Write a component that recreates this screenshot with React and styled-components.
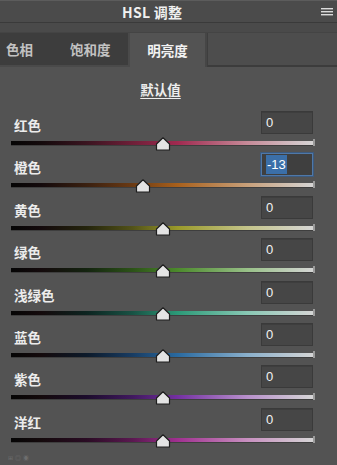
import React from "react";
import styled, { createGlobalStyle } from "styled-components";

const Global = createGlobalStyle`
  html, body { margin: 0; padding: 0; background: #535353; }
  body { font-family: "Noto Sans CJK SC", "Noto Sans", sans-serif; }
`;

const Panel = styled.div`
  width: 337px;
  height: 465px;
  background: #535353;
  display: flex;
  flex-direction: column;
  overflow: hidden;
`;

const Header = styled.div`
  display: flex;
  align-items: center;
  justify-content: space-between;
  background: #4b4b4b;
  border-top: 1px solid #5c5c5c;
  border-bottom: 1px solid #3a3a3a;
  box-sizing: border-box;
  height: 23px;
  padding-left: 122px;
`;

const Title = styled.div`
  color: #f0f0f0;
  font-size: 14px;
  font-weight: 700;
  letter-spacing: 0.3px;
`;

const MenuIcon = styled.svg`
  margin-right: 4px;
`;

const Band = styled.div`
  height: 9px;
  background: #4a4a4a;
  border-bottom: 1px solid #444;
`;

const TabBar = styled.div`
  height: 34px;
  display: flex;
  background: #4a4a4a;
`;

const TabGroup = styled.div`
  width: 128px;
  display: flex;
  background: #3d3d3d;
  height: 32px;
  margin-right: 2px;
`;

const Tab = styled.div`
  width: 64px;
  box-sizing: border-box;
  padding-left: 6px;
  display: flex;
  align-items: center;
  color: #c2c2c2;
  font-size: 13.5px;
  font-weight: 700;
`;

const ActiveTab = styled.div`
  width: 75px;
  display: flex;
  align-items: center;
  justify-content: center;
  color: #f2f2f2;
  font-size: 13.5px;
  font-weight: 700;
  background: #535353;
  border-right: 2px solid #464646;
`;

const Filler = styled.div`
  flex: 1;
  background: #4d4d4d;
  border-left: 1px solid #3e3e3e;
  border-bottom: 2px solid #3c3c3c;
  height: 34px;
  box-sizing: border-box;
`;

const DefaultWrap = styled.div`
  display: flex;
  justify-content: center;
  padding-top: 13px;
  padding-right: 16px;
  height: 44px;
  box-sizing: border-box;
`;

const DefaultButton = styled.span`
  color: #ededed;
  font-size: 13.5px;
  font-weight: 700;
  text-decoration: underline;
  text-underline-offset: 3px;
  line-height: 18px;
`;

const Rows = styled.div`
  display: flex;
  flex-direction: column;
`;

const Row = styled.div`
  height: 42.4px;
  display: grid;
  grid-template-columns: 1fr 52px;
  grid-template-rows: 23px 1fr;
  padding: 0 24px 0 11px;
`;

const Label = styled.div`
  color: #ececec;
  font-size: 13.5px;
  font-weight: 700;
  padding-left: 3px;
  display: flex;
  align-items: flex-end;
  line-height: 18px;
  padding-top: 4px;
`;

const ValueBox = styled.div`
  box-sizing: border-box;
  height: 23px;
  background: ${(p) => (p.$active ? "#3f3f3f" : "#464646")};
  border: 1px solid ${(p) => (p.$active ? "#4f78a8" : "#3a3a3a")};
  box-shadow: ${(p) =>
    p.$active ? "0 0 0 1px #3c5a7e" : "inset 0 1px 0 #3e3e3e"};
  display: flex;
  align-items: center;
  padding-left: 4px;
  color: #f2f2f2;
  font-size: 13px;
  font-family: "Liberation Sans", "Noto Sans", sans-serif;
`;

const Selected = styled.span`
  background: #3b6fa8;
  color: #fff;
  padding: 1px 1px;
  line-height: 17px;
`;

const TrackArea = styled.div`
  grid-column: 1 / 3;
  position: relative;
  margin-right: -1px;
`;

const Track = styled.div`
  position: absolute;
  left: 0;
  right: 0;
  top: 7px;
  height: 4px;
  background: ${(p) => p.$grad};
  box-shadow: 0 1px 0 rgba(0, 0, 0, 0.25);
`;

const EndCap = styled.div`
  position: absolute;
  right: -1px;
  top: 5px;
  width: 2px;
  height: 7px;
  background: #9a9a9a;
`;

const Thumb = styled.svg`
  position: absolute;
  top: 3px;
  margin-left: -8px;
`;

const Footer = styled.div`
  display: flex;
  gap: 2px;
  padding: 3px 0 0 8px;
  color: #6e6e6e;
  font-size: 6px;
  font-family: "Noto Sans CJK SC", sans-serif;
`;

const grad = (d1, d2, mid, light) =>
  `linear-gradient(to right, #050505 0%, #140a0c 10%, ${d1} 25%, ${d2} 40%, ${mid} 55%, ${light} 78%, #d6d6d6 100%)`;

const rows = [
  { label: "红色", value: 0, g: grad("#3a1420", "#6e1f38", "#a02a50", "#c68a98") },
  { label: "橙色", value: -13, active: true, g: grad("#3a2010", "#6a3a14", "#a8601c", "#c8a07a") },
  { label: "黄色", value: 0, g: grad("#24240c", "#525218", "#9a9a2a", "#c4c48a") },
  { label: "绿色", value: 0, g: grad("#142410", "#2c5218", "#4c8a2c", "#98c088") },
  { label: "浅绿色", value: 0, g: grad("#0c2420", "#185244", "#2c9a78", "#88c8b4") },
  { label: "蓝色", value: 0, g: grad("#0c1a2a", "#183c62", "#2a6aa0", "#8ab0cc") },
  { label: "紫色", value: 0, g: grad("#1c0c2c", "#40185e", "#7430a2", "#b890cc") },
  { label: "洋红", value: 0, g: grad("#2a0c24", "#5a1850", "#a03090", "#c890c0") },
];

function ThumbIcon({ pct }) {
  return (
    <Thumb width="16" height="14" viewBox="0 0 16 14" style={{ left: `${pct}%` }}>
      <path d="M8 0.8 L14.5 7 L14.5 13 L1.5 13 L1.5 7 Z" fill="#e4e4e4" stroke="#1e1e1e" strokeWidth="1.2" strokeLinejoin="round" />
    </Thumb>
  );
}

export default function App() {
  return (
    <>
      <Global />
      <Panel>
        <Header>
          <Title>HSL 调整</Title>
          <MenuIcon width="12" height="10" viewBox="0 0 12 10">
            <rect x="0" y="1" width="12" height="1.4" fill="#dcdcdc" />
            <rect x="0" y="4" width="12" height="1.4" fill="#dcdcdc" />
            <rect x="0" y="7" width="12" height="1.4" fill="#dcdcdc" />
          </MenuIcon>
        </Header>
        <Band />
        <TabBar>
          <TabGroup>
            <Tab>色相</Tab>
            <Tab>饱和度</Tab>
          </TabGroup>
          <ActiveTab>明亮度</ActiveTab>
          <Filler />
        </TabBar>
        <DefaultWrap>
          <DefaultButton>默认值</DefaultButton>
        </DefaultWrap>
        <Rows>
          {rows.map((r) => (
            <Row key={r.label}>
              <Label>{r.label}</Label>
              <ValueBox $active={r.active}>
                {r.active ? <Selected>{r.value}</Selected> : r.value}
              </ValueBox>
              <TrackArea>
                <Track $grad={r.g} />
                <EndCap />
                <ThumbIcon pct={50 + r.value / 2} />
              </TrackArea>
            </Row>
          ))}
        </Rows>
        <Footer>
          <span>⊞</span>
          <span>◎</span>
          <span>◉</span>
        </Footer>
      </Panel>
    </>
  );
}
